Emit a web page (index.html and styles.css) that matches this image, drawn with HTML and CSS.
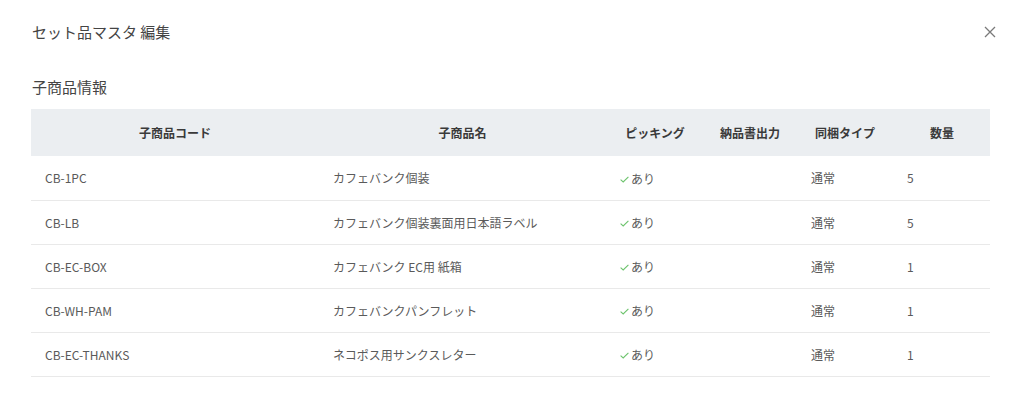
FILE: index.html
```html
<!DOCTYPE html>
<html lang="ja">
<head>
<meta charset="utf-8">
<title>セット品マスタ 編集</title>
<link rel="stylesheet" href="styles.css">
</head>
<body>
<div class="modal">
  <div class="modal-head">
    <h1 class="modal-title">セット品マスタ 編集</h1>
    <button class="close" aria-label="閉じる">
      <svg width="12" height="12" viewBox="0 0 12 12"><path d="M1 1L11 11M11 1L1 11" stroke="#7a7a7a" stroke-width="1.3" fill="none"/></svg>
    </button>
  </div>
  <h2 class="section-title">子商品情報</h2>
  <table class="items">
    <colgroup>
      <col class="c1"><col class="c2"><col class="c3"><col class="c4"><col class="c5"><col class="c6">
    </colgroup>
    <thead>
      <tr><th>子商品コード</th><th>子商品名</th><th>ピッキング</th><th>納品書出力</th><th>同梱タイプ</th><th>数量</th></tr>
    </thead>
    <tbody>
      <tr><td>CB-1PC</td><td>カフェバンク個装</td><td><span class="chk"><svg width="9" height="7" viewBox="0 0 9 7"><path d="M0.6 3.6L3.2 6L8.4 0.8" stroke="#6cc36c" stroke-width="1.1" fill="none"/></svg>あり</span></td><td></td><td>通常</td><td>5</td></tr>
      <tr><td>CB-LB</td><td>カフェバンク個装裏面用日本語ラベル</td><td><span class="chk"><svg width="9" height="7" viewBox="0 0 9 7"><path d="M0.6 3.6L3.2 6L8.4 0.8" stroke="#6cc36c" stroke-width="1.1" fill="none"/></svg>あり</span></td><td></td><td>通常</td><td>5</td></tr>
      <tr><td>CB-EC-BOX</td><td>カフェバンク EC用 紙箱</td><td><span class="chk"><svg width="9" height="7" viewBox="0 0 9 7"><path d="M0.6 3.6L3.2 6L8.4 0.8" stroke="#6cc36c" stroke-width="1.1" fill="none"/></svg>あり</span></td><td></td><td>通常</td><td>1</td></tr>
      <tr><td>CB-WH-PAM</td><td>カフェバンクパンフレット</td><td><span class="chk"><svg width="9" height="7" viewBox="0 0 9 7"><path d="M0.6 3.6L3.2 6L8.4 0.8" stroke="#6cc36c" stroke-width="1.1" fill="none"/></svg>あり</span></td><td></td><td>通常</td><td>1</td></tr>
      <tr><td>CB-EC-THANKS</td><td>ネコポス用サンクスレター</td><td><span class="chk"><svg width="9" height="7" viewBox="0 0 9 7"><path d="M0.6 3.6L3.2 6L8.4 0.8" stroke="#6cc36c" stroke-width="1.1" fill="none"/></svg>あり</span></td><td></td><td>通常</td><td>1</td></tr>
    </tbody>
  </table>
</div>
</body>
</html>
```

FILE: styles.css
```css
* { box-sizing: border-box; }
html, body { margin: 0; padding: 0; background: #fff; }
body {
  font-family: "Noto Sans CJK JP", "Noto Sans", sans-serif;
  color: #333;
}
.modal {
  width: 1024px;
  padding: 22px 34px 0 31px;
}
.modal-head {
  display: flex;
  justify-content: space-between;
  align-items: center;
  height: 20px;
}
.modal-title {
  margin: 0 0 0 1px;
  font-size: 15px;
  line-height: 20px;
  font-weight: 400;
  color: #444;
}
.close {
  border: 0;
  background: none;
  padding: 0;
  margin-right: -6px;
  width: 12px;
  height: 12px;
  display: flex;
  cursor: pointer;
}
.section-title {
  margin: 35px 0 12px 1px;
  font-size: 15px;
  line-height: 20px;
  font-weight: 400;
  color: #444;
}
.items {
  width: 959px;
  border-collapse: collapse;
  table-layout: fixed;
  font-size: 12px;
}
.c1 { width: 288px; }
.c2 { width: 287px; }
.c3 { width: 98px; }
.c4 { width: 92px; }
.c5 { width: 98px; }
.c6 { width: 96px; }
.items th {
  background: #ebeef1;
  height: 47px;
  padding: 0;
  text-align: center;
  font-weight: 700;
  color: #3a3a3a;
}
.items td {
  height: 44px;
  padding: 0 0 0 14px;
  color: #5a5a5a;
  border-bottom: 1px solid #e9e9e9;
  vertical-align: middle;
}
.items td:nth-child(6) { padding-left: 13px; }
.items td:nth-child(5) { padding-left: 15px; }
.chk {
  display: inline-flex;
  align-items: center;
  gap: 2px;
}
.chk svg { margin-top: 1px; }
```
